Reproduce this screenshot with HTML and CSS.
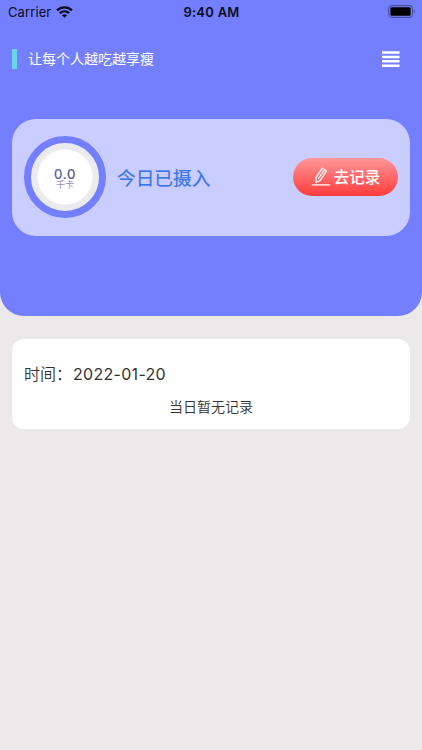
FILE: index.html
```html
<!DOCTYPE html>
<html lang="zh-CN">
<head>
<meta charset="utf-8">
<title>今日已摄入</title>
<link rel="stylesheet" href="styles.css">
</head>
<body>
<header class="hero">
  <div class="status">
    <div class="status-left">
      <span class="carrier">Carrier</span>
      <svg class="wifi" viewBox="0 0 17 12" width="17" height="12">
        <g fill="none" stroke="#090d20" stroke-width="2.4">
          <path d="M1 4.4C5.3.3 11.7.3 16 4.4"/>
          <path d="M3.8 7.2c2.7-2.5 6.7-2.5 9.4 0"/>
        </g>
        <path d="M5.9 9.2c1.5-1.3 3.7-1.3 5.2 0L8.5 11.8z" fill="#090d20"/>
      </svg>
    </div>
    <span class="clock">9:40 AM</span>
    <svg class="battery" viewBox="0 0 28 13" width="28" height="13">
      <rect x=".6" y=".6" width="23.8" height="11.8" rx="3.4" fill="none" stroke="#484f9c" stroke-width="1.1"/>
      <rect x="2.4" y="2.2" width="20.2" height="8.6" rx="1.4" fill="#000"/>
      <path d="M25.8 4.5c1.7.6 1.7 3.4 0 4z" fill="#484f9c"/>
    </svg>
  </div>
  <div class="titlebar">
    <h1 class="title">让每个人越吃越享瘦</h1>
    <svg class="menu" viewBox="0 0 18 16" width="18" height="16" fill="none" stroke="#fff" stroke-width="2.5">
      <path d="M0 1.5h17.5M0 5.9h17.5M0 10.3h17.5M0 14.7h17.5"/>
    </svg>
  </div>
  <section class="intake">
    <div class="ring">
      <span class="amount">0.0</span>
      <span class="unit">千卡</span>
    </div>
    <h2 class="intake-label">今日已摄入</h2>
    <button class="record">
      <svg viewBox="0 0 20 20" width="20" height="20" fill="none" stroke="#fff" stroke-width="1.3" stroke-linejoin="round" stroke-linecap="round">
        <path d="M5.2 10.2 11.2 1.3l4.2 2.8-6.2 9.3-4.3 2.3z"/>
        <path d="m7.6 11.4 5.2-7.7"/>
        <path d="M1.3 17.8h17.2"/>
      </svg>
      <span class="record-text">去记录</span>
    </button>
  </section>
</header>
<main class="log">
  <p class="date"><span class="date-label">时间：</span><span class="date-value">2022-01-20</span></p>
  <p class="empty">当日暂无记录</p>
</main>
</body>
</html>
```
FILE: styles.css
```css
* { box-sizing: border-box; }
body {
  margin: 0;
  min-height: 750px;
  background: #ebe9ea;
  font-family: Inter, "Noto Sans CJK SC", sans-serif;
}
h1, h2, p { margin: 0; }
.hero {
  height: 316px;
  padding: 0 12px;
  background: #747fff;
  border-radius: 0 0 24px 24px;
}
.status {
  display: grid;
  grid-template-columns: 1fr auto 1fr;
  align-items: center;
  height: 24px;
  margin: 0 -6px 0 -5px;
  color: #090d20;
}
.status-left { display: flex; align-items: center; gap: 5px; padding-left: 1px; }
.carrier { font-size: 13px; letter-spacing: .1px; }
.clock { font-size: 13px; font-weight: 600; letter-spacing: .25px; }
.battery { justify-self: end; margin-top: -1px; }
.titlebar {
  display: flex;
  align-items: center;
  justify-content: space-between;
  height: 70px;
  padding-right: 10px;
}
.title {
  border-left: 5px solid #68d6e5;
  padding-left: 11px;
  height: 20px;
  color: #fff;
  font-size: 14px;
  font-weight: 400;
  line-height: 20px;
}
.intake {
  display: flex;
  align-items: center;
  height: 117px;
  margin-top: 25px;
  padding: 0 12px 1px;
  background: #cacdff;
  border-radius: 24px;
}
.ring {
  display: flex;
  flex-direction: column;
  align-items: center;
  justify-content: center;
  width: 82px;
  height: 82px;
  padding-top: 2px;
  border: 7px solid #747fff;
  border-radius: 50%;
  background: radial-gradient(circle at 34px 34px, #fff 27px, #ebebed 28px);
}
.amount {
  font-size: 13.5px;
  line-height: 12px;
  letter-spacing: .6px;
  background: linear-gradient(90deg, #5964ca, #555564);
  background-clip: text;
  -webkit-background-clip: text;
  color: transparent;
  -webkit-text-stroke: .2px #5a60a0;
}
.unit { font-size: 9px; line-height: 9px; color: #9093c7; }
.intake-label {
  margin-left: 11px;
  padding-bottom: 2px;
  color: #3976e8;
  font-size: 18.7px;
  font-weight: 400;
  -webkit-text-stroke: .2px #3976e8;
}
.record {
  display: flex;
  align-items: center;
  justify-content: center;
  gap: 3px;
  width: 105px;
  height: 38px;
  margin-left: auto;
  padding: 0;
  border: 0;
  border-radius: 19px;
  background: linear-gradient(#ff9799, #ff3b3c);
  color: #fff;
  font: 500 15.5px/20px Inter, "Noto Sans CJK SC", sans-serif;
}
.record-text { padding-top: 2px; }
.log {
  height: 90px;
  margin: 23px 12px 0;
  padding: 23px 12px 0;
  background: #fff;
  border-radius: 12px;
  color: #333;
}
.date { display: flex; height: 24px; font-size: 16px; line-height: 24px; }
.date-label { width: 49px; font-weight: 350; white-space: nowrap; }
.date-value { letter-spacing: .3px; }
.empty {
  margin-top: 11px;
  font-size: 14px;
  font-weight: 350;
  line-height: 20px;
  text-align: center;
}
```
